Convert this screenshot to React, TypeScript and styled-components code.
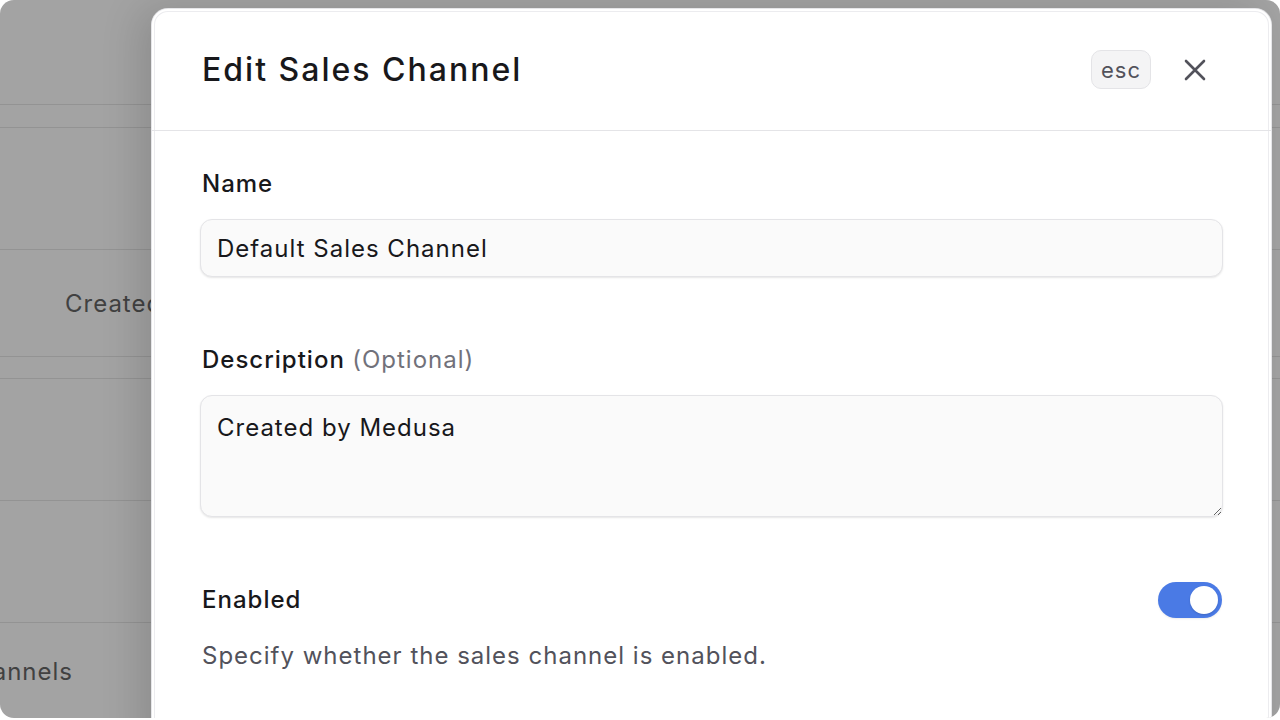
import styled, { createGlobalStyle } from 'styled-components';

const GlobalStyle = createGlobalStyle`
  html, body {
    margin: 0;
    padding: 0;
    background: #ffffff;
    font-family: Inter, "Noto Sans", sans-serif;
    overflow: hidden;
  }
  * { box-sizing: border-box; }
`;

// Dimmed page behind the modal
const Frame = styled.div`
  position: relative;
  height: 718px;
  border-radius: 14px;
  background: #a3a3a3;
  overflow: hidden;
`;

const BackRow = styled.div<{ $h: number }>`
  height: ${(p) => p.$h}px;
  border-bottom: 1px solid #939393;
  display: flex;
  align-items: center;
`;

const BackCell = styled.div<{ $w: number }>`
  width: ${(p) => p.$w}px;
  display: flex;
  justify-content: flex-end;
  overflow: hidden;
  white-space: nowrap;
  font-size: 24px;
  letter-spacing: 1px;
  color: #414141;
`;

const BackText = styled.div`
  padding-left: 65px;
  white-space: nowrap;
  font-size: 24px;
  letter-spacing: 1px;
  color: #414141;
`;

// Modal
const Modal = styled.div`
  position: absolute;
  top: 9px;
  left: 152px;
  right: 9px;
  bottom: -40px;
  background: #ffffff;
  border-radius: 16px;
  box-shadow: 0 0 0 1px #e6e6e9, inset 0 0 0 2px #ffffff, inset 0 0 0 3px #ececef,
    -12px 0 40px rgba(0, 0, 0, 0.14);
  display: flex;
  flex-direction: column;
`;

const Header = styled.div`
  height: 122px;
  flex-shrink: 0;
  display: flex;
  align-items: center;
  justify-content: space-between;
  padding: 0 56px 0 50px;
  border-bottom: 1px solid #e4e4e7;
`;

const Title = styled.h1`
  margin: 0;
  font-size: 32px;
  font-weight: 500;
  color: #18181b;
  letter-spacing: 2px;
`;

const HeaderActions = styled.div`
  display: flex;
  align-items: center;
  gap: 24px;
`;

const Kbd = styled.span`
  display: inline-flex;
  align-items: center;
  justify-content: center;
  height: 39px;
  width: 60px;
  border-radius: 10px;
  background: #f4f4f5;
  border: 1px solid #e4e4e7;
  font-size: 22px;
  letter-spacing: 1px;
  color: #52525b;
`;

const CloseButton = styled.button`
  width: 40px;
  height: 40px;
  padding: 0;
  border: none;
  background: transparent;
  display: flex;
  align-items: center;
  justify-content: center;
  color: #52525b;
  cursor: pointer;
`;

const Body = styled.div`
  padding: 35px 48px 0 48px;
  display: flex;
  flex-direction: column;
  gap: 65px;
`;

const Field = styled.div`
  display: flex;
  flex-direction: column;
  gap: 17px;
`;

const Label = styled.label`
  padding-left: 2px;
  font-size: 24px;
  line-height: 36px;
  font-weight: 500;
  letter-spacing: 1px;
  color: #18181b;
`;

const Optional = styled.span`
  font-weight: 400;
  color: #71717a;
`;

const Input = styled.input`
  height: 58px;
  width: 100%;
  border-radius: 12px;
  border: 1px solid #e4e4e7;
  background: #fafafa;
  box-shadow: 0 1px 2px rgba(0, 0, 0, 0.1);
  padding: 0 16px;
  font-family: inherit;
  font-size: 24px;
  letter-spacing: 1px;
  color: #18181b;
  outline: none;
`;

const TextArea = styled.textarea`
  height: 122px;
  width: 100%;
  border-radius: 12px;
  border: 1px solid #e4e4e7;
  background: #fafafa;
  box-shadow: 0 1px 2px rgba(0, 0, 0, 0.1);
  padding: 14px 16px;
  font-family: inherit;
  font-size: 24px;
  line-height: 36px;
  letter-spacing: 1px;
  color: #18181b;
  outline: none;
  resize: vertical;
`;

const SwitchRow = styled.div`
  display: flex;
  align-items: center;
  justify-content: space-between;
`;

const Switch = styled.div<{ $on: boolean }>`
  width: 64px;
  height: 36px;
  border-radius: 18px;
  background: ${(p) => (p.$on ? '#4a7ae5' : '#e4e4e7')};
  display: flex;
  align-items: center;
  justify-content: ${(p) => (p.$on ? 'flex-end' : 'flex-start')};
  padding: 0 4px;
  box-shadow: 0 1px 2px rgba(0, 0, 0, 0.08);
  margin-right: 1px;
`;

const Knob = styled.div`
  width: 28px;
  height: 28px;
  border-radius: 50%;
  background: #ffffff;
  box-shadow: 0 1px 2px rgba(0, 0, 0, 0.15);
`;

const Hint = styled.p`
  margin: -45px 0 0 2px;
  font-size: 24px;
  line-height: 36px;
  letter-spacing: 1px;
  color: #52525b;
`;

const XIcon = () => (
  <svg width="22" height="22" viewBox="0 0 22 22" fill="none">
    <path d="M2 2L20 20M20 2L2 20" stroke="currentColor" strokeWidth="2.6" strokeLinecap="round" />
  </svg>
);

export default function App() {
  return (
    <>
      <GlobalStyle />
      <Frame>
        <BackRow $h={105} />
        <BackRow $h={23} />
        <BackRow $h={122} />
        <BackRow $h={107}>
          <BackText>Created by Medusa</BackText>
        </BackRow>
        <BackRow $h={22} />
        <BackRow $h={122} />
        <BackRow $h={122} />
        <BackRow $h={98}>
          <BackCell $w={73}>Sales Channels</BackCell>
        </BackRow>

        <Modal>
          <Header>
            <Title>Edit Sales Channel</Title>
            <HeaderActions>
              <Kbd>esc</Kbd>
              <CloseButton aria-label="Close">
                <XIcon />
              </CloseButton>
            </HeaderActions>
          </Header>
          <Body>
            <Field>
              <Label>Name</Label>
              <Input defaultValue="Default Sales Channel" />
            </Field>
            <Field>
              <Label>
                Description <Optional>(Optional)</Optional>
              </Label>
              <TextArea defaultValue="Created by Medusa" />
            </Field>
            <SwitchRow>
              <Label>Enabled</Label>
              <Switch $on>
                <Knob />
              </Switch>
            </SwitchRow>
            <Hint>Specify whether the sales channel is enabled.</Hint>
          </Body>
        </Modal>
      </Frame>
    </>
  );
}
